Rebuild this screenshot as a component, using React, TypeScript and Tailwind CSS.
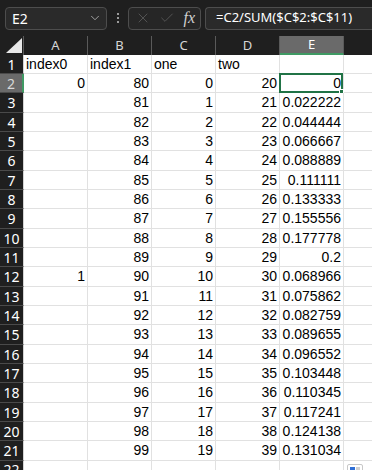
import { ChevronDown, X, Check } from 'lucide-react'

const colE = [
  '0', '0.022222', '0.044444', '0.066667', '0.088889', '0.111111', '0.133333', '0.155556', '0.177778', '0.2',
  '0.068966', '0.075862', '0.082759', '0.089655', '0.096552', '0.103448', '0.110345', '0.117241', '0.124138', '0.131034',
]

// row 1 is the header text row, rows 2..21 hold numbers
const rows: string[][] = [
  ['index0', 'index1', 'one', 'two', ''],
  ...colE.map((e, i) => [i === 0 ? '0' : i === 10 ? '1' : '', String(80 + i), String(i), String(20 + i), e]),
]

// 406px over 21 rows -> 19,19,20 pattern
const rowHeights = ['h-[19px]', 'h-[19px]', 'h-[20px]']

function FormulaBar() {
  return (
    <div className="flex h-[36px] items-center bg-[#1f1f1f] pl-[5px] font-['Noto_Sans',sans-serif] text-[14px] text-white">
      <div className="flex h-[23px] w-[102px] items-center justify-between rounded-[4px] border border-[#4d4d4d] bg-[#2a2a2a] pl-[6px] pr-[4px]">
        <span>E2</span>
        <ChevronDown size={14} strokeWidth={1.5} className="text-[#b0b0b0]" />
      </div>
      <div className="flex w-[21px] flex-col items-center gap-[2px]">
        <span className="h-[2px] w-[2px] bg-[#9a9a9a]" />
        <span className="h-[2px] w-[2px] bg-[#9a9a9a]" />
        <span className="h-[2px] w-[2px] bg-[#9a9a9a]" />
      </div>
      <div className="flex h-[23px] w-[73px] items-center justify-between rounded-[4px] border border-[#4d4d4d] bg-[#262626] pl-[6px] pr-[5px]">
        <X size={16} strokeWidth={1} className="text-[#6a6a6a]" />
        <Check size={16} strokeWidth={1} className="text-[#6a6a6a]" />
        <span className="font-['Liberation_Serif',serif] text-[16px] italic text-[#d0d0d0]">fx</span>
      </div>
      <div className="ml-[4px] flex h-[23px] flex-1 items-center rounded-l-[4px] border border-r-0 border-[#4d4d4d] bg-[#2a2a2a] pl-[10px] text-[13px]">
        =C2/SUM($C$2:$C$11)
      </div>
    </div>
  )
}

function ColumnHeaders() {
  return (
    <div className="flex h-[19px] bg-[#1f1f1f] font-['Noto_Sans',sans-serif] text-[13px] text-[#d6d6d6]">
      <div className="flex w-[24px] items-end justify-end border-r border-[#5a5a5a] pb-[2px] pr-[1px]">
        <svg width="16" height="15" viewBox="0 0 16 15">
          <polygon points="0,15 16,15 16,0" fill="#e8e8e8" />
        </svg>
      </div>
      {['A', 'B', 'C', 'D'].map((c) => (
        <div key={c} className="flex w-[64px] items-center justify-center border-r border-[#5a5a5a] leading-none">
          {c}
        </div>
      ))}
      <div className="flex w-[64px] items-center justify-center border-b-2 border-r border-[#3f9a64] border-r-[#5a5a5a] bg-[#6a6a6a] leading-none text-white">
        E
      </div>
      <div className="flex-1" />
    </div>
  )
}

function Row({ n, cells, h }: { n: number; cells: string[]; h: string }) {
  const selected = n === 2
  return (
    <div className={`flex ${h}`}>
      <div
        className={
          selected
            ? "flex w-[24px] items-center justify-center border-b border-r-2 border-[#4a4a4a] border-r-[#3f9a64] bg-[#6a6a6a] font-['Noto_Sans',sans-serif] text-[14px] text-[#d8d8d8]"
            : "flex w-[24px] items-center justify-center border-b border-r border-[#4a4a4a] border-r-[#d4d4d4] bg-[#1f1f1f] font-['Noto_Sans',sans-serif] text-[14px] text-white"
        }
      >
        {n}
      </div>
      {cells.map((v, i) => {
        const isText = n === 1
        const isActive = selected && i === 4
        return (
          <div
            key={i}
            className={`relative flex w-[64px] items-center border-b border-r border-[#e1e1e1] bg-white px-[2px] font-['Liberation_Sans',sans-serif] text-[14px] text-black ${
              isText ? 'justify-start' : 'justify-end'
            }`}
          >
            {v}
            {isActive && (
              <div className="absolute -left-[1px] -top-[1px] h-[calc(100%+2px)] w-[calc(100%+1px)] border-2 border-[#217346]">
                <div className="absolute -bottom-[3px] -right-[3px] h-[5px] w-[5px] border border-white bg-[#217346]" />
              </div>
            )}
          </div>
        )
      })}
      <div className="flex-1 border-b border-[#e1e1e1] bg-white" />
    </div>
  )
}

export default function App() {
  return (
    <div className="h-[470px] w-[372px] overflow-hidden bg-[#1f1f1f]">
      <FormulaBar />
      <ColumnHeaders />
      {rows.map((cells, i) => (
        <Row key={i} n={i + 1} cells={cells} h={rowHeights[i % 3]} />
      ))}
      <div className="relative flex h-[20px]">
        <div className="flex w-[24px] items-start justify-center border-r border-[#d4d4d4] bg-[#1f1f1f] font-['Noto_Sans',sans-serif] text-[14px] leading-[18px] text-white">
          22
        </div>
        {[0, 1, 2, 3, 4].map((i) => (
          <div key={i} className="w-[64px] border-r border-[#e1e1e1] bg-white" />
        ))}
        <div className="flex-1 bg-white" />
        {/* quick analysis button peeking in */}
        <div className="absolute left-[347px] top-[3px] flex h-[16px] w-[16px] items-start gap-[1px] rounded-[2px] border border-[#c8c8c8] bg-white p-[2px]">
          <span className="h-[5px] w-[5px] bg-[#2f6fd6]" />
          <span className="h-[5px] w-[4px] bg-[#d0d0d0]" />
        </div>
      </div>
    </div>
  )
}
